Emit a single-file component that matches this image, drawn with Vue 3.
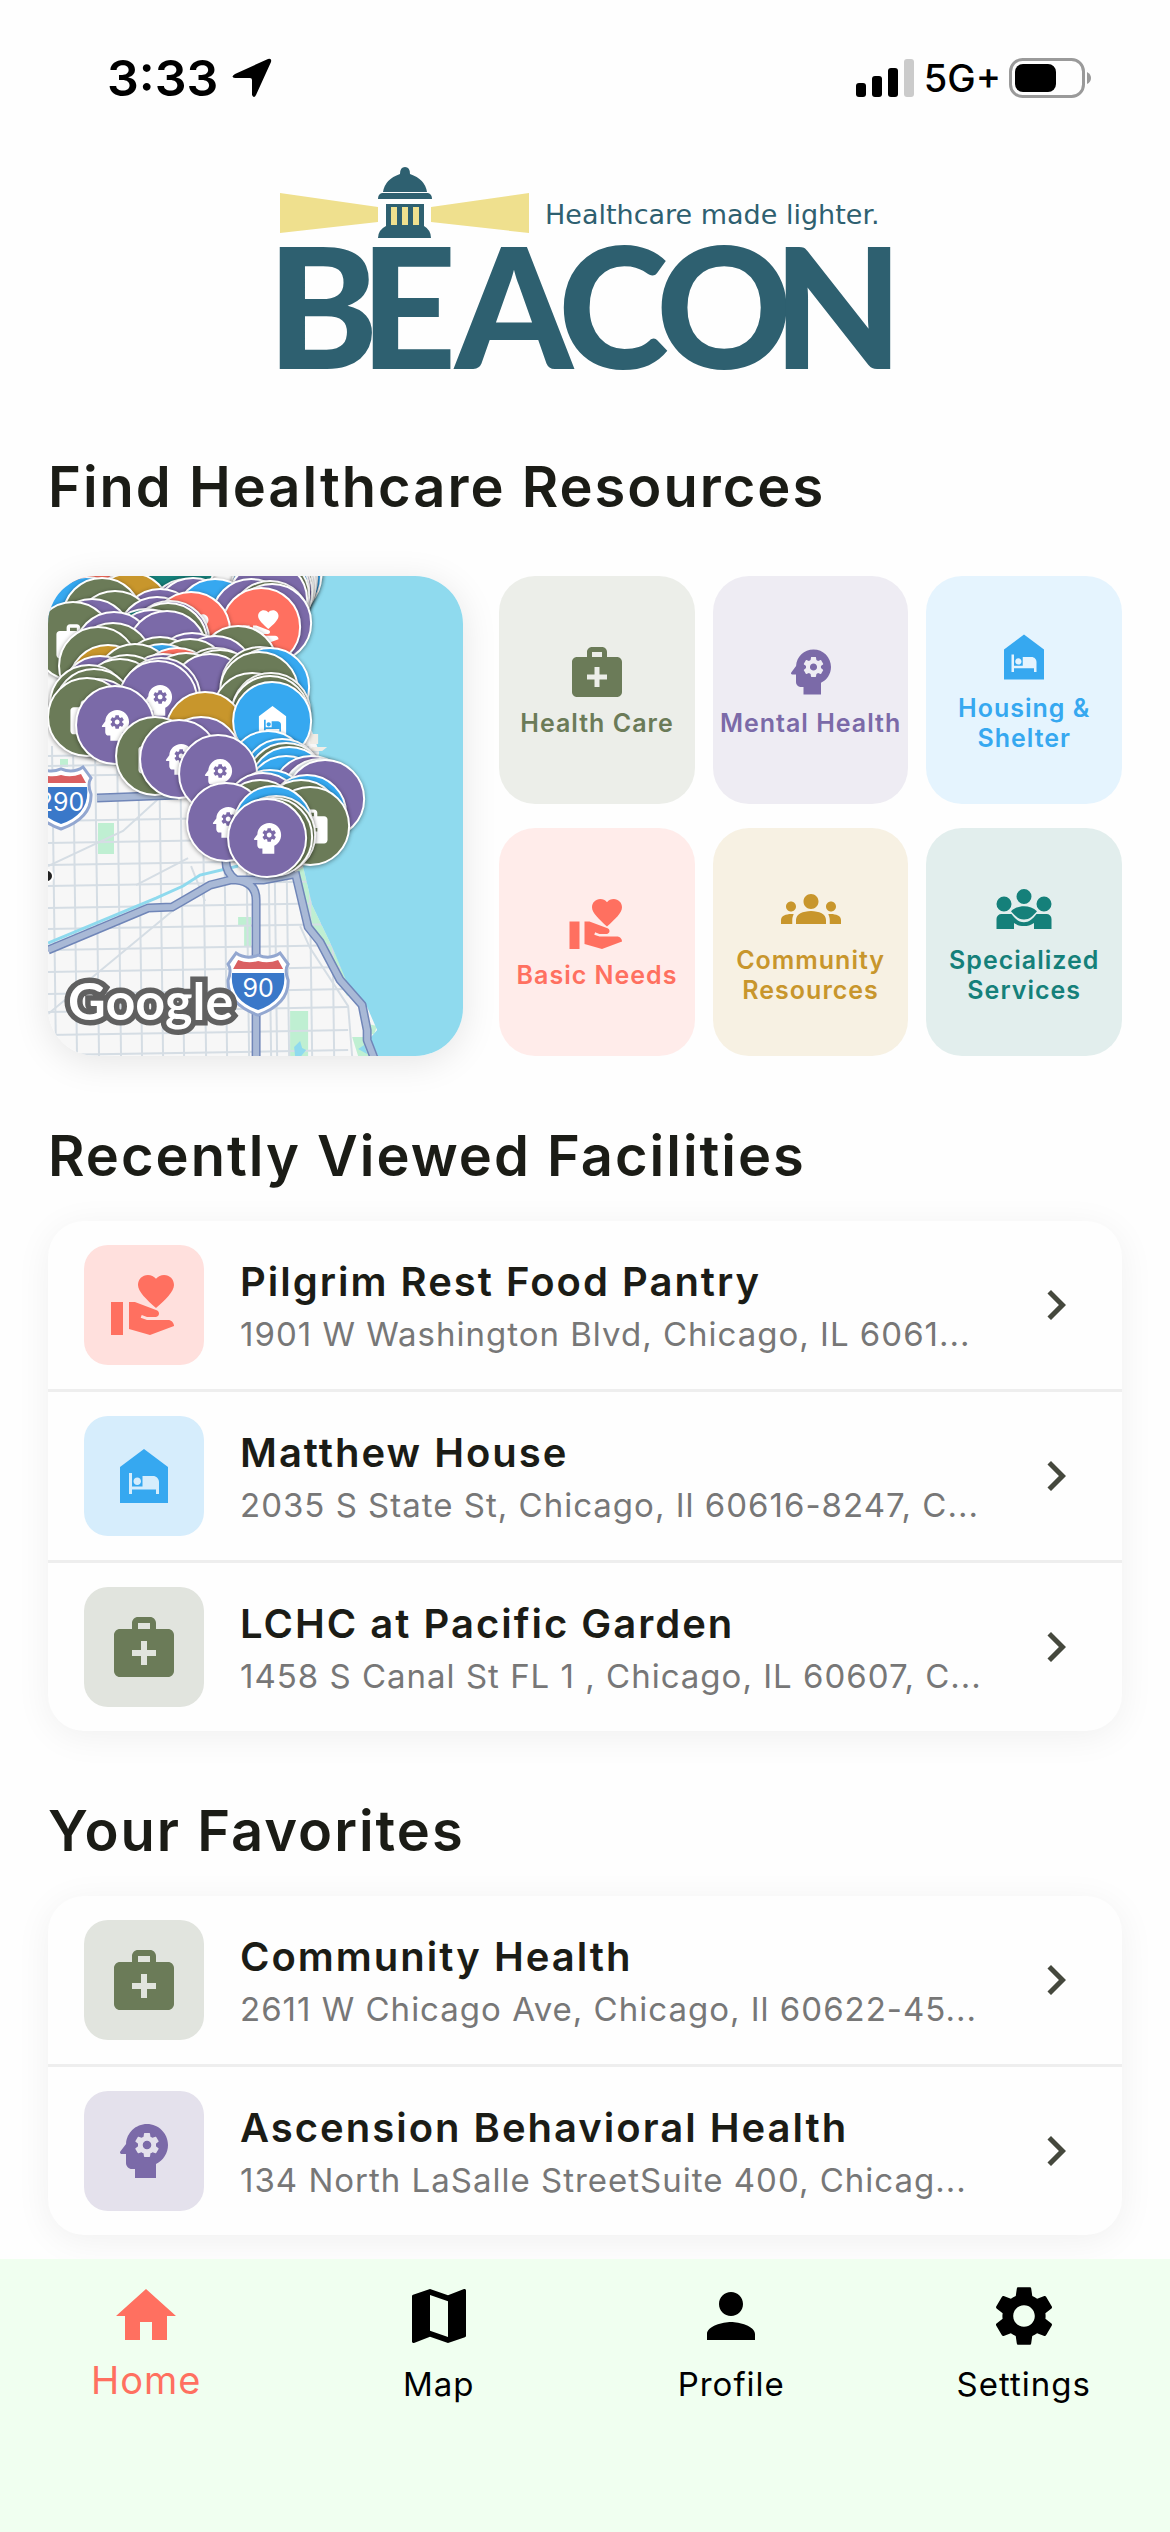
<script setup>
const icons = {
  medical: 'M20 6h-4V4c0-1.11-.89-2-2-2h-4c-1.11 0-2 .89-2 2v2H4c-1.11 0-2 .89-2 2v12c0 1.1.9 2 2 2h16c1.1 0 2-.9 2-2V8c0-1.11-.89-2-2-2zM10 4h4v2h-4V4zm6 11h-3v3h-2v-3H8v-2h3v-3h2v3h3v2z',
  mental: 'M13 8.57c-.79 0-1.43.64-1.43 1.43s.64 1.43 1.43 1.43 1.43-.64 1.43-1.43-.64-1.43-1.43-1.43zM13 3C9.25 3 6.2 5.94 6.02 9.64L4.1 12.2c-.25.33-.01.8.4.8H6v3c0 1.1.9 2 2 2h1v3h7v-4.68c2.36-1.12 4-3.53 4-6.32 0-3.87-3.13-7-7-7zm3 7c0 .13-.01.26-.02.39l.83.66c.08.06.1.16.05.25l-.8 1.39c-.05.09-.16.12-.24.09l-.99-.4c-.21.16-.43.29-.67.39L14 13.83c-.01.1-.1.17-.2.17h-1.6c-.1 0-.18-.07-.2-.17l-.15-1.06c-.25-.1-.47-.23-.68-.39l-.99.4c-.09.03-.2 0-.25-.09l-.8-1.39c-.05-.08-.03-.19.05-.25l.84-.66c-.01-.13-.02-.26-.02-.39s.02-.27.04-.39l-.85-.66c-.08-.06-.1-.16-.05-.26l.8-1.38c.05-.09.15-.12.24-.09l1 .4c.2-.15.43-.29.67-.39L12 6.17c.02-.1.1-.17.2-.17h1.6c.1 0 .18.07.2.17l.15 1.06c.24.1.46.23.67.39l1-.4c.09-.03.2 0 .24.09l.8 1.38c.05.09.03.2-.05.26l-.85.66c.03.12.04.25.04.39z',
  shelter: 'M12 3L4 9v12h16V9L12 3zM9.75 12.5c.69 0 1.25.56 1.25 1.25S10.44 15 9.75 15 8.5 14.44 8.5 13.75 9.06 12.5 9.75 12.5zM17 18h-1v-1.5H8V18H7v-7h1v4.5h3.5V12H15c1.1 0 2 .9 2 2v4z',
  giving: 'M1 11h4v11H1zM16 3.25C16.65 2.49 17.66 2 18.7 2 20.55 2 22 3.45 22 5.3c0 2.27-2.91 4.9-6 7.7-3.09-2.81-6-5.44-6-7.7C10 3.45 11.45 2 13.3 2c1.04 0 2.05.49 2.7 1.25zM20 17h-7l-2.09-.73.33-.94L13 16h2.82c.65 0 1.18-.53 1.18-1.18 0-.49-.31-.93-.77-1.11L8.97 11H7v9.02L14 22l8.01-3c-.01-1.1-.9-2-2.01-2z',
  community: 'M12 12.75c1.63 0 3.07.39 4.24.9 1.08.48 1.76 1.56 1.76 2.73V18H6v-1.61c0-1.18.68-2.26 1.76-2.73 1.17-.52 2.61-.91 4.24-.91zM4 13c1.1 0 2-.9 2-2s-.9-2-2-2-2 .9-2 2 .9 2 2 2zm1.13 1.1c-.37-.06-.74-.1-1.13-.1-.99 0-1.93.21-2.78.58C.48 14.9 0 15.62 0 16.43V18h4.5v-1.61c0-.83.23-1.61.63-2.29zM20 13c1.1 0 2-.9 2-2s-.9-2-2-2-2 .9-2 2 .9 2 2 2zm4 3.43c0-.81-.48-1.53-1.22-1.85-.85-.37-1.79-.58-2.78-.58-.39 0-.76.04-1.13.1.4.68.63 1.46.63 2.29V18H24v-1.57zM12 6c1.66 0 3 1.34 3 3s-1.34 3-3 3-3-1.34-3-3 1.34-3 3-3z',
  special: 'M12 4a3 3 0 1 1 0 6a3 3 0 1 1 0-6zM4 7a3 3 0 1 1 0 6a3 3 0 1 1 0-6zM20 7a3 3 0 1 1 0 6a3 3 0 1 1 0-6zM6.8 12.9C9.5 10.2 14.5 10.2 17.2 12.9C15.5 14.8 14.3 16.2 12 16.2S8.5 14.8 6.8 12.9zM1 20v-4a2 2 0 0 1 2-2h4C8.5 16 10 17.3 12 17.3S15.5 16 17 14h4a2 2 0 0 1 2 2v4h-7v-2.4C14.5 18.6 13.5 18.8 12 18.8S9.5 18.6 8 17.6V20z',
  home: 'M10 20v-6h4v6h5v-8h3L12 3 2 12h3v8z',
  map: 'M20.5 3l-.16.03L15 5.1 9 3 3.36 4.9c-.21.07-.36.25-.36.48V20.5c0 .28.22.5.5.5l.16-.03L9 18.9l6 2.1 5.64-1.9c.21-.07.36-.25.36-.48V3.5c0-.28-.22-.5-.5-.5zM15 19l-6-2.11V5l6 2.11V19z',
  profile: 'M12 12c2.21 0 4-1.79 4-4s-1.79-4-4-4-4 1.79-4 4 1.79 4 4 4zm0 2c-2.67 0-8 1.34-8 4v2h16v-2c0-2.66-5.33-4-8-4z',
  settings: 'M19.14 12.94c.04-.3.06-.61.06-.94 0-.32-.02-.64-.07-.94l2.03-1.58c.18-.14.23-.41.12-.61l-1.92-3.32c-.12-.22-.37-.29-.59-.22l-2.39.96c-.5-.38-1.03-.7-1.62-.94l-.36-2.54c-.04-.24-.24-.41-.48-.41h-3.84c-.24 0-.43.17-.47.41l-.36 2.54c-.59.24-1.13.57-1.62.94l-2.39-.96c-.22-.08-.47 0-.59.22L2.74 8.87c-.12.21-.08.47.12.61l2.03 1.58c-.05.3-.09.63-.09.94s.02.64.07.94l-2.03 1.58c-.18.14-.23.41-.12.61l1.92 3.32c.12.22.37.29.59.22l2.39-.96c.5.38 1.03.7 1.62.94l.36 2.54c.05.24.24.41.48.41h3.84c.24 0 .44-.17.47-.41l.36-2.54c.59-.24 1.13-.56 1.62-.94l2.39.96c.22.08.47 0 .59-.22l1.92-3.32c.12-.22.07-.47-.12-.61l-2.01-1.58zM12 15.6c-1.98 0-3.6-1.62-3.6-3.6s1.62-3.6 3.6-3.6 3.6 1.62 3.6 3.6-1.62 3.6-3.6 3.6z',
  chevron: 'M10 6L8.59 7.41 13.17 12l-4.58 4.59L10 18l6-6z'
}

const categories = [
  { name: 'Health Care', icon: 'medical', tone: 'green' },
  { name: 'Mental Health', icon: 'mental', tone: 'purple' },
  { name: 'Housing & Shelter', icon: 'shelter', tone: 'blue' },
  { name: 'Basic Needs', icon: 'giving', tone: 'coral' },
  { name: 'Community Resources', icon: 'community', tone: 'gold' },
  { name: 'Specialized Services', icon: 'special', tone: 'teal' }
]

const sections = [
  {
    title: 'Recently Viewed Facilities',
    items: [
      { name: 'Pilgrim Rest Food Pantry', address: '1901 W Washington Blvd, Chicago, IL 6061...', icon: 'giving', tone: 'coral' },
      { name: 'Matthew House', address: '2035 S State St, Chicago, Il 60616-8247, C...', icon: 'shelter', tone: 'blue' },
      { name: 'LCHC at Pacific Garden', address: '1458 S Canal St FL 1 , Chicago, IL 60607, C...', icon: 'medical', tone: 'green' }
    ]
  },
  {
    title: 'Your Favorites',
    items: [
      { name: 'Community Health', address: '2611 W Chicago Ave, Chicago, Il 60622-45...', icon: 'medical', tone: 'green' },
      { name: 'Ascension Behavioral Health', address: '134 North LaSalle StreetSuite 400, Chicag...', icon: 'mental', tone: 'purple' }
    ]
  }
]

const tabs = [
  { name: 'Home', icon: 'home', active: true },
  { name: 'Map', icon: 'map' },
  { name: 'Profile', icon: 'profile' },
  { name: 'Settings', icon: 'settings' }
]

const G = '#6b7b58', P = '#7b6aa8', B = '#36a8f0', C = '#ff7060', Y = '#c8962c', T = '#15807a', K = '#e8eef0'
// Facility pins, back to front: x, y, colour, optional icon
const pins = [
  [235, -6, G], [234, 0, B], [230, 2, P], [229, 6, G], [228, 10, K], [226, 12, G], [225, 16, P], [222, 14, B], [222, 20, G], [220, 24, P],
  [50, 34, C], [84, 34, P], [96, 38, P], [129, -16, T], [38, 40, B], [83, 36, Y], [54, 41, G],
  [139, 42, P], [145, 41, P], [167, 42, B], [203, 42, P], [222, 44, G], [224, 47, P], [213, 51, C, 'giving'],
  [112, 52, P], [67, 54, G], [109, 60, P], [44, 62, P], [143, 55, C, 'giving'], [122, 64, P], [120, 66, G], [98, 72, T], [104, 73, P],
  [25, 65, G, 'medical'], [66, 75, P], [119, 74, P], [190, 89, G], [65, 86, G], [50, 90, G], [144, 96, P], [167, 99, P],
  [112, 100, G], [142, 102, G], [60, 108, Y], [114, 107, B], [87, 107, G], [129, 111, C], [168, 111, G], [172, 113, G],
  [115, 117, P], [138, 116, G], [162, 117, P], [52, 119, P], [79, 118, G], [72, 122, G], [113, 121, P],
  [212, 110, G], [222, 111, B], [211, 115, G], [41, 128, G], [46, 132, G], [110, 124, P, 'mental'],
  [204, 136, G], [223, 136, G], [222, 139, G], [50, 142, P], [39, 141, G, 'medical'], [67, 149, P, 'mental'],
  [157, 155, Y], [224, 145, B, 'shelter'], [153, 180, P], [107, 180, G, 'medical'], [131, 183, P, 'mental'],
  [220, 194, B], [234, 202, B], [238, 206, G], [241, 210, B], [238, 219, B], [263, 219, P], [272, 222, K], [277, 223, P],
  [170, 198, P, 'mental'], [222, 233, B], [215, 236, P], [259, 238, B], [253, 243, G], [212, 243, G], [262, 250, G, 'medical'],
  [178, 246, P, 'mental'], [225, 249, B], [228, 259, G], [225, 261, G], [219, 262, P, 'mental']
]

const streetsV = [4, 25, 47, 69, 90, 111, 132, 154, 175, 197, 219, 225, 237, 260, 282]
const streetsH = [180, 190, 200, 245, 267, 289, 310, 332, 353, 374, 396, 418, 436, 459, 479]
</script>

<template>
  <div class="page">
    <header class="status">
      <div class="status-left">
        <time>3:33</time>
        <svg class="arrow" viewBox="0 0 40 40" aria-hidden="true"><path d="M36 1Q40 0 39 4L24 37Q22 41 20 37V22Q20 20 18 20H3Q-2 19 3 16z" /></svg>
      </div>
      <div class="status-right">
        <svg class="signal" viewBox="0 0 60 38" aria-hidden="true">
          <rect x="0" y="24" width="10" height="14" rx="3" />
          <rect x="16" y="17" width="10" height="21" rx="3" />
          <rect x="32" y="9" width="10" height="29" rx="3" />
          <rect x="48" y="0" width="10" height="38" rx="3" fill="#cbcbcb" />
        </svg>
        <span>5G+</span>
        <svg class="battery" viewBox="0 0 83 40" aria-hidden="true">
          <rect x="1.5" y="1.5" width="73" height="37" rx="12" fill="none" stroke="#9a9a9a" stroke-width="3" />
          <rect x="6" y="6" width="41" height="28" rx="8" />
          <path d="M78 14q4 2 4 6t-4 6z" fill="#9a9a9a" />
        </svg>
      </div>
    </header>

    <main>
      <svg class="logo" viewBox="-15 0 640 206" role="img" aria-label="Beacon. Healthcare made lighter.">
        <g fill="#efe08e">
          <path d="M0 26L98 40V55L0 66zM249 26L151 40V55L249 66z" />
        </g>
        <g fill="#2e6070">
          <path d="M120 7q0-7 5-7t5 7q15 5 17 18H103q2-13 17-18zM102 26h46q4 1 4 6H98q0-5 4-6zM106 37h38v22q7 4 7 12H98q0-8 8-12z" />
          <path fill="#efe08e" d="M111 40h6v18h-6zM122 40h6v18h-6zM133 40h6v18h-6z" />
          <text class="tagline" x="265" y="57">Healthcare made lighter.</text>
          <text class="wordmark" y="202" x="-13 80 175 278 376 493">BEACON</text>
        </g>
      </svg>

      <h2>Find Healthcare Resources</h2>
      <section class="finder" aria-label="Find Healthcare Resources">
        <a class="map" href="#map" aria-label="Open map">
          <svg viewBox="0 0 415 480" preserveAspectRatio="xMidYMid slice">
            <rect width="415" height="480" fill="#f7f7f7" />
            <g fill="#bfefd2">
              <path d="M12 183h8v8h-8zM50 247h16v31H50zM190 341h13v30h-7v-21h-6zM242 435h18v45H242zM304 461h20v19h-14zM255 291l9 38 20 42 20 44-5 5-40-70-10-55zM320 448l9 2-3 8-6 1z" />
            </g>
            <g stroke="#d5dde4" stroke-width="2" fill="none">
              <path v-for="x in streetsV" :key="'v' + x" :d="`M${x} 170L${x + 4} 480`" />
              <path v-for="y in streetsH" :key="'h' + y" :d="`M0 ${y}L300 ${y - 5}`" />
              <path d="M0 290L75 255 130 205M0 438L140 322M88 309L140 282M143 290L157 325M252 350L262 372 300 430 304 480" />
            </g>
            <path fill="#8fdaee" d="M415 0H240V120L262 150 271 176 255 291 264 329 284 371 302 414 319 431 329 454 322 462 330 480H415z" />
            <path fill="#f0ede6" d="M262 158h8v10h-8zM264 171h15l-5 4h-12z" />
            <path d="M0 367L108 322 135 310 152 299 190 290" stroke="#8fdaee" stroke-width="3" fill="none" />
            <path d="M246 471l6-6 2 7 4 2-5 6h-6zM310 473l6-4 3 9z" fill="#8fdaee" />
            <g v-for="(s, i) in [['#7086b8', 9], ['#a9b9d6', 6]]" :key="i" :stroke="s[0]" :stroke-width="s[1]" fill="none" stroke-linejoin="round">
              <path d="M0 374L100 332 124 331 162 309 182 304 215 304 247 298M178 280Q176 296 188 304 208 306 208 324V480M247 296L260 351 272 366 292 404 314 429 319 454V464L326 482M49 222L130 219" />
            </g>
            <circle cx="-1" cy="300" r="6" fill="#222" stroke="#fff" stroke-width="2" />
            <g v-for="s in [{ x: 13, y: 222, t: '290' }, { x: 210, y: 408, t: '90' }]" :key="s.t" :transform="`translate(${s.x} ${s.y})`">
              <path d="M-22-31Q-12-24 0-29 12-24 22-31L30-20Q26-14 30-4 31 20 0 31-31 20-30-4-26-14-30-20z" fill="#fff" stroke="#93a7d0" stroke-width="3" />
              <path d="M-20-24Q-10-20 0-23 10-20 20-24L25-15H-25z" fill="#da6062" />
              <path d="M-26-11H26Q29 16 0 26-29 16-26-11z" fill="#3a78c9" />
              <text class="route" y="13" text-anchor="middle">{{ s.t }}</text>
            </g>
            <g v-for="(p, i) in pins" :key="'p' + i" :transform="`translate(${p[0]} ${p[1]})`">
              <circle class="pin" r="39" :fill="p[2]" />
              <path v-if="p[3]" :d="icons[p[3]]" fill="#fff" transform="translate(-20 -20) scale(1.7)" />
            </g>
            <text class="google" x="20" y="444">Google</text>
          </svg>
        </a>
        <div class="tiles">
          <button v-for="c in categories" :key="c.name" type="button" class="tile" :class="c.tone">
            <svg viewBox="0 0 24 24" aria-hidden="true"><path :d="icons[c.icon]" /></svg>
            <span>{{ c.name }}</span>
          </button>
        </div>
      </section>

      <template v-for="s in sections" :key="s.title">
        <h2 class="spaced">{{ s.title }}</h2>
        <ul class="card">
          <li v-for="f in s.items" :key="f.name">
            <a class="row" href="#facility">
              <span class="badge" :class="f.tone"><svg viewBox="0 0 24 24" aria-hidden="true"><path :d="icons[f.icon]" /></svg></span>
              <span class="info">
                <strong>{{ f.name }}</strong>
                <span class="address">{{ f.address }}</span>
              </span>
              <svg class="chevron" viewBox="0 0 24 24" aria-hidden="true"><path :d="icons.chevron" /></svg>
            </a>
          </li>
        </ul>
      </template>
    </main>

    <nav>
      <a v-for="t in tabs" :key="t.name" :href="'#' + t.name" :class="{ active: t.active }">
        <svg viewBox="0 0 24 24" aria-hidden="true"><path :d="icons[t.icon]" /></svg>
        <span>{{ t.name }}</span>
      </a>
    </nav>
  </div>
</template>

<style>
body {
  margin: 0;
  background: #fefefe;
}
</style>

<style scoped>
.page {
  --tracking-title: 2px;
  --tracking-body: 1px;
  min-height: 100vh;
  display: flex;
  flex-direction: column;
  font-family: Inter, "Liberation Sans", sans-serif;
  color: #1b1c16;
}
a {
  color: inherit;
  text-decoration: none;
}
svg {
  display: block;
  fill: currentColor;
}
.status {
  display: flex;
  align-items: center;
  justify-content: space-between;
  padding: 48px 78px 0 107px;
  height: 60px;
  color: #000;
}
.status-left,
.status-right {
  display: flex;
  align-items: center;
}
.status-left {
  gap: 14px;
  font-size: 50px;
  font-weight: 600;
}
.status-right {
  gap: 8px;
  font-size: 38px;
  font-weight: 500;
}
.arrow {
  width: 40px;
  height: 40px;
}
.signal {
  width: 60px;
  height: 38px;
}
.battery {
  width: 83px;
  height: 40px;
}
main {
  flex: 1;
  padding: 59px 48px 24px;
}
.logo {
  width: 640px;
  height: 206px;
  margin: 0 auto;
  overflow: visible;
}
.tagline {
  font-family: "DejaVu Sans", sans-serif;
  font-size: 27px;
}
.wordmark {
  font-family: Lato, sans-serif;
  font-size: 168px;
  font-weight: 900;
}
h2 {
  margin: 81px 0 56px;
  font-size: 56px;
  line-height: 66px;
  font-weight: 600;
  letter-spacing: var(--tracking-title);
}
h2.spaced {
  margin: 67px 0 32px;
}
.finder {
  display: flex;
  gap: 36px;
}
.map {
  flex: 2 1 0;
  min-width: 0;
  height: 480px;
  border-radius: 48px;
  overflow: hidden;
  box-shadow: 0 6px 36px rgba(0, 0, 0, 0.1);
}
.map > svg {
  width: 100%;
  height: 100%;
}
.pin {
  stroke: #fff;
  stroke-width: 2px;
  filter: drop-shadow(0 1px 2px rgba(0, 0, 0, 0.4));
}
.route {
  font-size: 25px;
  fill: #fff;
}
.google {
  font-family: Lato, sans-serif;
  font-size: 52px;
  font-weight: 700;
  fill: #fff;
  stroke: #606060;
  stroke-width: 11px;
  paint-order: stroke;
}
.tiles {
  flex: 3 1 0;
  min-width: 0;
  display: grid;
  grid-template-columns: repeat(3, minmax(0, 1fr));
  gap: 24px 18px;
}
.tile {
  display: flex;
  flex-direction: column;
  align-items: center;
  justify-content: center;
  gap: 6px;
  padding: 0;
  border: 0;
  border-radius: 36px;
  font-family: inherit;
  font-size: 25px;
  line-height: 30px;
  font-weight: 600;
  letter-spacing: var(--tracking-body);
}
.tile svg {
  width: 60px;
  height: 60px;
}
.tile.green { background: #eceee9; }
.tile.purple { background: #eeecf3; }
.tile.blue { background: #e5f4fe; }
.tile.coral { background: #ffecea; }
.tile.gold { background: #f7f1e3; }
.tile.teal { background: #e2eeed; }
.green { color: #6b7b58; }
.purple { color: #7b6aa8; }
.blue { color: #36a8f0; }
.coral { color: #ff7060; }
.gold { color: #c8962c; }
.teal { color: #15807a; }
.card {
  margin: 0;
  padding: 0;
  list-style: none;
  background: #fefefe;
  border-radius: 36px;
  box-shadow: 0 6px 36px rgba(0, 0, 0, 0.06);
}
.card li + li {
  border-top: 3px solid #eee;
}
.row {
  display: flex;
  align-items: center;
  gap: 36px;
  padding: 24px 36px;
}
.badge {
  flex: none;
  padding: 24px;
  border-radius: 24px;
}
.badge svg {
  width: 72px;
  height: 72px;
}
.badge.green { background: #e1e4de; }
.badge.purple { background: #e4e1ec; }
.badge.blue { background: #d6edfc; }
.badge.coral { background: #ffe0dd; }
.info {
  flex: 1;
  min-width: 0;
  padding-top: 6px;
  display: flex;
  flex-direction: column;
  line-height: 52px;
  white-space: nowrap;
}
.info strong {
  font-size: 40px;
  font-weight: 600;
  letter-spacing: var(--tracking-title);
}
.address {
  font-size: 33px;
  color: #777;
  letter-spacing: var(--tracking-body);
}
.chevron {
  flex: none;
  width: 60px;
  height: 60px;
  color: #45483d;
}
nav {
  position: sticky;
  bottom: 0;
  display: flex;
  padding: 21px 0 116px;
  background: #f0fff0;
  color: #000;
  letter-spacing: var(--tracking-body);
}
nav a {
  flex: 1;
  display: flex;
  flex-direction: column;
  align-items: center;
  font-size: 33px;
  line-height: 64px;
}
nav svg {
  width: 72px;
  height: 72px;
}
nav .active {
  color: #ff7060;
  font-size: 38px;
  line-height: 56px;
}
</style>
